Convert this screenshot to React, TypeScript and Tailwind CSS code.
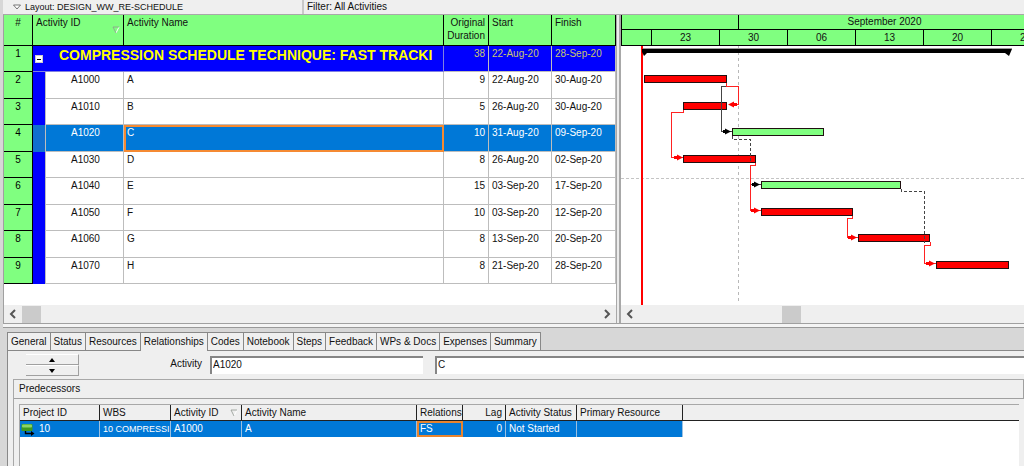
import React from 'react';

interface Activity {
  id: string;
  name: string;
  duration: number;
  start: string;
  finish: string;
}

const activities: Activity[] = [
  { id: 'A1000', name: 'A', duration: 9, start: '22-Aug-20', finish: '30-Aug-20' },
  { id: 'A1010', name: 'B', duration: 5, start: '26-Aug-20', finish: '30-Aug-20' },
  { id: 'A1020', name: 'C', duration: 10, start: '31-Aug-20', finish: '09-Sep-20' },
  { id: 'A1030', name: 'D', duration: 8, start: '26-Aug-20', finish: '02-Sep-20' },
  { id: 'A1040', name: 'E', duration: 15, start: '03-Sep-20', finish: '17-Sep-20' },
  { id: 'A1050', name: 'F', duration: 10, start: '03-Sep-20', finish: '12-Sep-20' },
  { id: 'A1060', name: 'G', duration: 8, start: '13-Sep-20', finish: '20-Sep-20' },
  { id: 'A1070', name: 'H', duration: 8, start: '21-Sep-20', finish: '28-Sep-20' },
];

const selectedId = 'A1020';

const tabs = [
  'General', 'Status', 'Resources', 'Relationships', 'Codes', 'Notebook',
  'Steps', 'Feedback', 'WPs & Docs', 'Expenses', 'Summary',
];

const weeks = ['23', '30', '06', '13', '20', '27'];

// x, y and width of each bar on the chart canvas
const bars = [
  { x: 23, y: 29, w: 83, critical: true },
  { x: 62, y: 56, w: 44, critical: true },
  { x: 111, y: 82, w: 92, critical: false },
  { x: 62, y: 109, w: 73, critical: true },
  { x: 140, y: 135, w: 140, critical: false },
  { x: 140, y: 162, w: 92, critical: true },
  { x: 237, y: 188, w: 72, critical: true },
  { x: 315, y: 215, w: 73, critical: true },
];

const SortMark = () => (
  <svg width="8" height="8" viewBox="0 0 8 8" className="shrink-0">
    <path d="M7 1L4 7" fill="none" stroke="#fff" />
    <path d="M7 1H1l3 6" fill="none" stroke="#909890" strokeWidth=".8" />
  </svg>
);

const Chevron = ({ right = false }: { right?: boolean }) => (
  <svg width="7" height="10" viewBox="0 0 7 10">
    <path d={right ? 'M1 1l4 4-4 4' : 'M6 1L2 5l4 4'} fill="none" stroke="#555" strokeWidth="2" />
  </svg>
);

const Toolbar = () => (
  <div className="flex h-[15px] shrink-0 border-b border-[#a8a8a8] bg-[#efefef] leading-[14px]">
    <button type="button" className="flex w-[301px] items-center border-r-2 border-[#c8c8c8] pl-[10px] text-[9px]">
      <svg width="8" height="6" viewBox="0 0 8 6" className="mr-1">
        <path d="M.5 1h7L4 5z" fill="#fff" stroke="#555" strokeWidth=".8" />
      </svg>
      Layout: DESIGN_WW_RE-SCHEDULE
    </button>
    <div className="flex-1 pl-[3px]">Filter: All Activities</div>
  </div>
);

const ActivityTable = () => {
  const th = 'border-r border-b border-black px-[3px] pt-px align-top font-normal leading-[13px]';
  const td = 'border-r border-b border-[#bdbdbd] px-[3px] pt-[2px] align-top leading-3';
  const num = 'border-r border-b border-black bg-[#80ff80] pt-[2px] text-center align-top font-normal leading-3';
  return (
    <table className="w-full table-fixed border-separate border-spacing-0">
      <colgroup>
        <col className="w-[29px]" />
        <col className="w-3" />
        <col className="w-[79px]" />
        <col />
        <col className="w-[45px]" />
        <col className="w-[63px]" />
        <col className="w-16" />
      </colgroup>
      <thead>
        <tr className="h-[31px] bg-[#80ff80] text-left">
          <th className={`${th} text-center`}>#</th>
          <th colSpan={2} className={th}>
            <div className="flex justify-between">
              Activity ID
              <span className="pt-[10px]"><SortMark /></span>
            </div>
          </th>
          <th className={th}>Activity Name</th>
          <th className={`${th} text-right`}>Original Duration</th>
          <th className={th}>Start</th>
          <th className={th}>Finish</th>
        </tr>
      </thead>
      <tbody>
        <tr className="h-[26px] bg-[#0000ff] text-[#c8c470]">
          <th className={`${num} text-black`}>1</th>
          <td colSpan={3} className="overflow-hidden border-r border-b border-[#8080e0] align-top">
            <div className="flex">
              <button type="button" aria-label="Collapse" className="mt-[9px] ml-[2px] flex h-2 w-2 shrink-0 items-center justify-center border border-[#ccc] bg-white">
                <span className="h-px w-1 bg-black" />
              </button>
              <span className="ml-4 whitespace-nowrap text-sm leading-[18px] font-bold text-[#ffff00]">
                COMPRESSION SCHEDULE TECHNIQUE: FAST TRACKI
              </span>
            </div>
          </td>
          <td className={`${td} text-right`}>38</td>
          <td className={td}>22-Aug-20</td>
          <td className={td}>28-Sep-20</td>
        </tr>
        {activities.map((a, i) => {
          const selected = a.id === selectedId;
          return (
            <tr
              key={a.id}
              className={`${i % 2 === 0 ? 'h-[27px]' : 'h-[26px]'} ${selected ? 'bg-[#0078d7] text-white' : 'bg-white'}`}
            >
              <th className={`${num} text-black`}>{i + 2}</th>
              <td className={selected ? 'bg-[#1070d0]' : 'bg-[#0000ff]'} />
              <td className={`${td} border-l pl-[25px]`}>{a.id}</td>
              <td className={selected ? 'border-2 border-[#f58a32] px-px align-top leading-3' : td}>{a.name}</td>
              <td className={`${td} text-right`}>{a.duration}</td>
              <td className={td}>{a.start}</td>
              <td className={td}>{a.finish}</td>
            </tr>
          );
        })}
      </tbody>
    </table>
  );
};

const Gantt = () => (
  <svg className="block h-[259px] w-full" shapeRendering="crispEdges">
    <path d="M117.5 0v257" stroke="#b8b8b8" strokeDasharray="3 3" />
    <path d="M0 132.5h2000" stroke="#c4c4c4" strokeDasharray="3 2" />
    <path d="M20.5 0v259" stroke="#f00" strokeWidth="2" />

    {/* project summary */}
    <path d="M22 2.5h369" stroke="#999" />
    <path d="M21 3h370l-3 7-4-3H26l-3 3-2-4z" fill="#000" shapeRendering="auto" />

    {bars.map((b) => (
      <rect
        key={b.x + '-' + b.y}
        x={b.x + 0.5}
        y={b.y + 0.5}
        width={b.w - 1}
        height="7"
        fill={b.critical ? '#f00' : '#80ff80'}
        stroke="#201010"
      />
    ))}

    {/* driving links */}
    <g fill="none" stroke="#f22">
      <path d="M105.5 37v3.5h11.5v18h-9" />
      <path d="M62.5 64v2.5h-12v45H62" />
      <path d="M134.5 117v2.5h-5v45H140" />
      <path d="M231.5 170v2.5h-5v18.5H237" />
      <path d="M309.5 196v3.5h-6v18H315" />
    </g>
    <g fill="none" stroke="#444">
      <path d="M105 40.5h-5v45H111" />
      <path d="M111.5 90v3.5h18v23" strokeDasharray="3 2" />
      <path d="M130 138.5h10" />
      <path d="M280.5 143v2.5h23v51" strokeDasharray="3 2" />
    </g>

    <g shapeRendering="auto">
      <g fill="#f00">
        <path d="M107 58.5l6-3v1.5h3v3h-3v1.5z" />
        <path d="M62 111.5l-6-3v1.5h-3v3h3v1.5z" />
        <path d="M139 164.5l-6-3v1.5h-3v3h3v1.5z" />
        <path d="M236 191.5l-6-3v1.5h-3v3h3v1.5z" />
        <path d="M314 217.5l-6-3v1.5h-3v3h3v1.5z" />
      </g>
      <g fill="#000">
        <path d="M110 85.5l-6-3v1.5h-2v3h2v1.5z" />
        <path d="M139 138.5l-6-3v1.5h-2v3h2v1.5z" />
      </g>
    </g>
  </svg>
);

const GanttPane = () => (
  <section className="flex min-w-0 flex-1 flex-col overflow-hidden bg-white">
    <div className="flex h-[15px] shrink-0 border-b border-l border-black bg-[#80ff80] text-center leading-[13px]">
      <div className="w-[117px] shrink-0 border-r border-black" />
      <div className="w-[291px] shrink-0">September 2020</div>
    </div>
    <div className="flex h-4 shrink-0 border-b border-l border-black bg-[#80ff80] text-center leading-[15px]">
      <div className="w-[30px] shrink-0 border-r border-black" />
      {weeks.map((w) => (
        <div key={w} className="w-[68px] shrink-0 border-r border-black">{w}</div>
      ))}
    </div>
    <Gantt />
    <div className="flex h-[18px] items-center bg-[#efefef] pl-[5px]">
      <button type="button" aria-label="Scroll left"><Chevron /></button>
      <div className="ml-[149px] h-[17px] w-[19px] bg-[#cbcbcb]" />
    </div>
  </section>
);

const predCell = 'border-r border-[#9cc0e0] pl-[3px] whitespace-nowrap overflow-hidden';
const predHead = 'border-r border-b border-[#222] pl-[3px] font-normal whitespace-nowrap overflow-hidden';

const Predecessors = () => (
  <div className="flex flex-1 flex-col border-t border-l border-[#a8a8a8] bg-[#efefef]">
    <h2 className="h-[19px] border-r border-b border-[#a0a0a0] pl-[5px] leading-[18px]">Predecessors</h2>
    <div className="mt-[5px] mr-[5px] ml-[5px] flex-1 border-t border-l border-[#a8a8a8] bg-white">
      <table className="w-full table-fixed border-separate border-spacing-0 text-left leading-[14px]">
        <colgroup>
          <col className="w-20" />
          <col className="w-[71px]" />
          <col className="w-[71px]" />
          <col className="w-[175px]" />
          <col className="w-[46px]" />
          <col className="w-[43px]" />
          <col className="w-[71px]" />
          <col className="w-[106px]" />
          <col />
        </colgroup>
        <thead>
          <tr className="h-4 bg-[#efefef]">
            <th className={predHead}>Project ID</th>
            <th className={predHead}>WBS</th>
            <th className={predHead}>
              <div className="flex items-center justify-between pr-[3px]">Activity ID <SortMark /></div>
            </th>
            <th className={predHead}>Activity Name</th>
            <th className={predHead}>Relations</th>
            <th className={`${predHead} pr-[3px] text-right`}>Lag</th>
            <th className={predHead}>Activity Status</th>
            <th className={predHead}>Primary Resource</th>
            <td className="border-b border-[#222]" />
          </tr>
        </thead>
        <tbody>
          <tr className="h-4 bg-[#0078d7] text-white">
            <td className={predCell}>
              <div className="flex items-center">
                <svg width="14" height="13" viewBox="0 0 14 13" className="-ml-[2px]">
                  <rect x=".5" y="1" width="11" height="7" rx="1" fill="#3c9a1e" />
                  <rect x="1" y="1.5" width="10" height="3" rx="1" fill="#8ad468" />
                  <path d="M4.5 8v2.5H11" fill="none" stroke="#000" strokeWidth="1.4" />
                  <path d="M10 8l3.5 2.5L10 13z" fill="#000" />
                </svg>
                <span className="ml-1">10</span>
              </div>
            </td>
            <td className={`${predCell} text-[9px]`}>10 COMPRESSI</td>
            <td className={predCell}>A1000</td>
            <td className={predCell}>A</td>
            <td className="border-2 border-[#e8842e] px-px leading-3">FS</td>
            <td className={`${predCell} pr-[3px] text-right`}>0</td>
            <td className={predCell}>Not Started</td>
            <td className={predCell} />
            <td className="bg-white" />
          </tr>
        </tbody>
      </table>
    </div>
  </div>
);

const Details = () => {
  const spin = 'flex h-[11px] w-[53px] items-center justify-center border-r border-b border-[#a0a0a0] border-t border-t-white bg-[#efefef]';
  const field = 'h-[18px] border-t-2 border-l-2 border-[#858585] bg-white px-px pb-[3px] outline-none';
  return (
    <section className="ml-1 flex flex-1 flex-col">
      <div role="tablist" className="flex h-[19px] border-l border-[#888]">
        {tabs.map((t) => (
          <button
            key={t}
            type="button"
            role="tab"
            aria-selected={t === 'Relationships'}
            className={`border-t border-r border-[#888] bg-[#efefef] px-[3px] leading-[18px] ${t === 'Relationships' ? '' : 'border-b'}`}
          >
            {t}
          </button>
        ))}
        <div className="flex-1 border-b border-[#888]" />
      </div>
      <div className="flex flex-1 flex-col border-l border-[#888] bg-[#efefef] pl-[5px]">
        <div className="flex h-7 items-start pt-[3px]">
          <div className="ml-[13px]">
            <button type="button" aria-label="Previous activity" className={spin}>
              <svg width="6" height="4" viewBox="0 0 6 4"><path d="M0 4h6L3 0z" /></svg>
            </button>
            <button type="button" aria-label="Next activity" className={spin}>
              <svg width="6" height="4" viewBox="0 0 6 4"><path d="M0 0h6L3 4z" /></svg>
            </button>
          </div>
          <label htmlFor="activity-id" className="w-[131px] pr-2 text-right leading-[20px]">Activity</label>
          <input id="activity-id" className={`${field} mt-[2px] w-[213px]`} defaultValue="A1020" />
          <input aria-label="Activity name" className={`${field} mt-[2px] ml-3 min-w-0 flex-1`} defaultValue="C" />
        </div>
        <Predecessors />
      </div>
    </section>
  );
};

export default function App() {
  return (
    <div className="flex min-h-screen flex-col bg-[#d7d7d7] pl-[3px] font-['Liberation_Sans',Arial,sans-serif] text-[10px] text-[#111]">
      <Toolbar />
      <main className="flex border-b border-l border-[#a0a0a0]">
        <section className="flex w-[612px] shrink-0 flex-col bg-white">
          <ActivityTable />
          <div className="mt-auto flex h-[18px] items-center bg-[#efefef] px-[5px]">
            <button type="button" aria-label="Scroll left"><Chevron /></button>
            <div className="mr-auto ml-[6px] h-[17px] w-[19px] bg-[#cbcbcb]" />
            <button type="button" aria-label="Scroll right"><Chevron right /></button>
          </div>
        </section>
        <div className="w-[5px] shrink-0 border-r-2 border-l border-[#a8a8a8] bg-[#ececec]" />
        <GanttPane />
      </main>
      <div className="mb-1 h-1 border-b border-[#999] bg-[#f4f4f4]" />
      <Details />
    </div>
  );
}
